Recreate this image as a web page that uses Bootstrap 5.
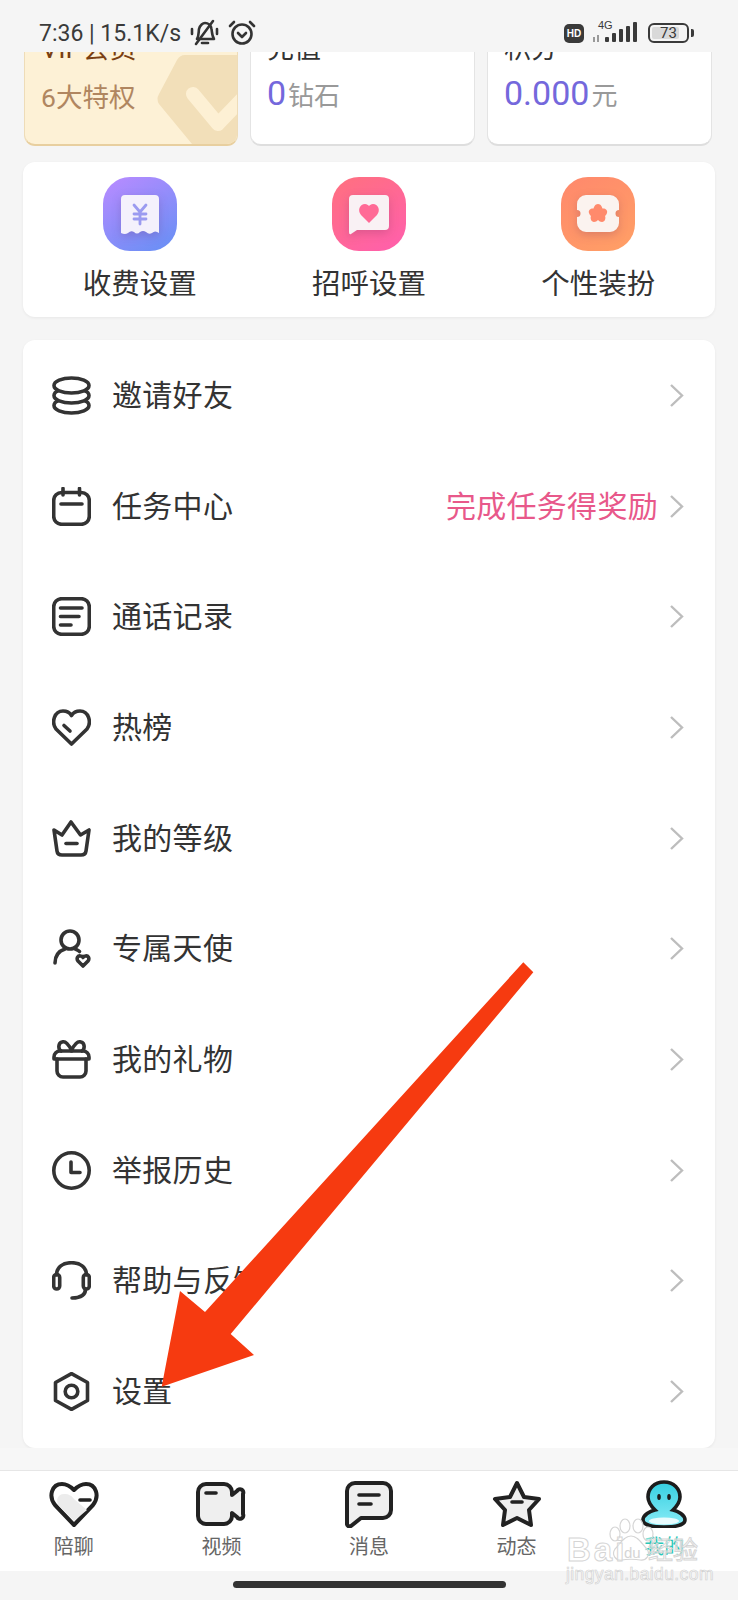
<!DOCTYPE html>
<html lang="zh-CN">
<head>
    <meta charset="UTF-8">
    <meta name="viewport" content="width=device-width, initial-scale=1.0">
    <title>我的</title>
    <link href="https://cdn.jsdelivr.net/npm/bootstrap@5.3.0/dist/css/bootstrap.min.css" rel="stylesheet">
    <style>
        body {
            background-color: #f5f5f5;
            font-family: "Roboto", "Noto Sans CJK SC", sans-serif;
            color: #333;
        }
        .phone-page {
            width: 738px;
            height: 1600px;
            overflow: hidden;
        }
        .status-bar {
            height: 52px;
            padding: 14px 44px 0 39px;
            background-color: #f5f5f5;
            font-size: 23px;
            line-height: 1;
            color: #3a3a3a;
            flex-shrink: 0;
        }
        .status-time { white-space: nowrap; }
        .hd-tag {
            width: 20px;
            height: 19px;
            border-radius: 5px;
            background-color: #3a3a3a;
            color: #fff;
            font: bold 10px/19px "Liberation Sans", sans-serif;
            text-align: center;
        }
        .net-box { width: 46px; height: 22px; margin-left: 8px; }
        .net-label {
            top: -2px;
            left: 6px;
            font: 11px/1 "Liberation Sans", sans-serif;
        }
        .batt-box {
            width: 41px;
            height: 20px;
            margin-left: 10px;
            border: 2px solid #3a3a3a;
            border-radius: 6px;
            font: 15px/16px "Roboto", sans-serif;
            text-align: center;
        }
        .batt-fill {
            top: 2px; bottom: 2px; left: 2px;
            background-color: #d9d9d9;
            border-radius: 2px;
        }
        .batt-text { z-index: 1; }
        .batt-nub {
            width: 3px;
            height: 8px;
            margin-left: 2px;
            background-color: #3a3a3a;
            border-radius: 0 2px 2px 0;
        }
        .scroll-area { height: 1396px; overflow: hidden; flex-shrink: 0; }
        .wallet-row {
            margin: -28px 0 0 24px;
            gap: 12px;
        }
        .wallet-box {
            width: 225px;
            height: 122px;
            background-color: #fff;
            border: 1px solid #e4e4e4;
            border-bottom: 2px solid #dedede;
            border-radius: 11px;
            padding: 6px 0 0 16px;
        }
        .wallet-vip {
            width: 214px;
            background-color: #fdf1d6;
            border-color: #eedcb8;
            border-bottom-color: #e8cf9f;
            overflow: hidden;
        }
        .vip-deco { right: 0; bottom: 0; }
        .wallet-title { font-size: 27px; line-height: 36px; }
        .wallet-vip .wallet-title { color: #7a3f12; }
        .wallet-value { margin-top: 3px; line-height: 46px; white-space: nowrap; }
        .wallet-vip .wallet-value { margin-top: 8px; font-size: 26.5px; color: #b08660; }
        .num-big { font-size: 34px; color: #7468dc; }
        .num-unit { font-size: 26px; color: #999; margin-left: 2px; }
        .white-panel {
            margin: 0 23px;
            background-color: #fff;
            border-radius: 12px;
            box-shadow: 0 1px 3px rgba(0, 0, 0, .06);
        }
        .tools-panel { height: 155px; margin-top: 16px; padding: 15px 2px 0; }
        .tool-label { font-size: 28.5px; line-height: 40px; margin-top: 14px; color: #333; }
        .tool-art { display: block; margin: 0 auto; }
        .soft-shadow { filter: drop-shadow(0 3px 5px rgba(90, 30, 90, .22)); }
        .menu-panel { height: 1108px; margin-top: 23px; }
        .menu-row {
            height: 110.7px;
            padding: 0 31px 0 29px;
            font-size: 30px;
            letter-spacing: .3px;
            color: #333;
        }
        .menu-row:first-child { margin-top: 2.5px; }
        .menu-icon { width: 39px; height: 39px; margin-right: 21px; flex-shrink: 0; }
        .line-art { fill: none; stroke: #333; stroke-width: 3.6; stroke-linecap: round; stroke-linejoin: round; }
        .thin-art { stroke-width: 2.6; }
        .menu-hint { color: #e8588a; margin-right: 11px; }
        .nav-gap { height: 22px; background-color: #f7f7f7; flex-shrink: 0; }
        .bottom-nav {
            height: 101px;
            padding-top: 9px;
            background-color: #fff;
            border-top: 1px solid #e6e6e6;
            flex-shrink: 0;
        }
        .nav-cell { width: 147.6px; text-align: center; font-size: 20px; line-height: 28px; color: #666; }
        .nav-art { display: block; height: 48px; margin: 0 auto 5px; }
        .nav-on { color: #2bc7b8; }
        .nav-line { fill: #efefef; stroke: #222; stroke-width: 4; stroke-linejoin: round; }
        .nav-dash { fill: none; stroke: #222; stroke-width: 3.6; stroke-linecap: round; }
        .home-area { flex: 1; }
        .home-pill { width: 273px; height: 7px; margin-top: 10px; background-color: #333; border-radius: 4px; }
        .arrow-layer { top: 0; left: 0; pointer-events: none; }
        .mark-box { left: 566px; top: 1518px; width: 135px; height: 70px; }
        .mark-bai {
            left: 1px; top: 15px;
            font: bold 33px/1 "Liberation Sans", sans-serif;
            letter-spacing: 3px;
            color: rgba(255, 255, 255, .4);
            -webkit-text-stroke: 1px #d5d5d5;
        }
        .mark-du {
            left: 58px; top: 27px;
            font: 15px/1 "Liberation Sans", sans-serif;
            color: #d5d5d5;
        }
        .mark-jing {
            left: 82px; top: 20px;
            font-size: 25px; line-height: 1;
            color: rgba(255, 255, 255, .4);
            -webkit-text-stroke: 1px #d5d5d5;
        }
        .mark-url {
            left: 0; top: 48px;
            font: 17.5px/1 "Liberation Sans", sans-serif;
            letter-spacing: .4px;
            color: rgba(255, 255, 255, .5);
            -webkit-text-stroke: .6px #cfcfcf;
            white-space: nowrap;
        }
    </style>
</head>
<body>
<div class="phone-page position-relative d-flex flex-column">

    <!-- barre de statut -->
    <div class="status-bar d-flex align-items-center position-relative">
        <span class="status-time">7:36 | 15.1K/s</span>
        <svg class="ms-2" width="31" height="28" viewBox="0 0 31 28">
            <g class="line-art thin-art">
                <path d="M8 20 C10 17 9.500 13 10 10 C11 6 14 4 16 4 C19 4 22 6 22.500 10 C23 13 23 17 25 20 Z"/>
                <path d="M13 24 H19"/>
                <path d="M7 25 L24 2"/>
                <path d="M3 10 V15 M28 10 V15"/>
            </g>
        </svg>
        <svg class="ms-2" width="28" height="28" viewBox="0 0 28 28">
            <g class="line-art thin-art">
                <circle cx="14" cy="15" r="9.500"/>
                <path d="M10 14 L14 18 L18 14"/>
                <path d="M2 7 L6 3 M26 7 L22 3"/>
            </g>
        </svg>
        <div class="ms-auto d-flex align-items-center">
            <span class="hd-tag">HD</span>
            <div class="net-box position-relative">
                <span class="net-label position-absolute">4G</span>
                <svg class="position-absolute bottom-0 start-0" width="46" height="22" viewBox="0 0 46 22">
                    <g fill="#3a3a3a">
                        <rect x="1" y="15" width="2" height="5" fill="#999"/>
                        <rect x="5" y="13" width="2" height="7" fill="#999"/>
                        <rect x="13" y="15" width="4" height="5" rx="1"/>
                        <rect x="20" y="11" width="4" height="9" rx="1"/>
                        <rect x="27" y="7" width="4" height="13" rx="1"/>
                        <rect x="34" y="4" width="4" height="16" rx="1"/>
                        <rect x="41" y="0" width="4" height="20" rx="1"/>
                    </g>
                </svg>
            </div>
            <div class="batt-box position-relative">
                <div class="batt-fill position-absolute" style="width: 73%"></div>
                <span class="batt-text position-relative">73</span>
            </div>
            <span class="batt-nub"></span>
        </div>
    </div>

    <div class="scroll-area">
        <!-- cartes du haut -->
        <div class="wallet-row d-flex">
            <div class="wallet-box wallet-vip position-relative">
                <svg class="vip-deco position-absolute" width="80" height="90" viewBox="0 0 80 90">
                    <path d="M28 1 H80 V90 H35 L2 50 Q-1 45 2 40 L20 6 Q23 1 28 1 Z" fill="#f2dfb9"/>
                    <path d="M36 40 L61 70 L86 44" fill="none" stroke="#fdf0d4" stroke-width="14" stroke-linecap="round" stroke-linejoin="round"/>
                </svg>
                <div class="wallet-title position-relative">VIP会员</div>
                <div class="wallet-value position-relative">6大特权</div>
            </div>
            <div class="wallet-box">
                <div class="wallet-title">充值</div>
                <div class="wallet-value"><span class="num-big">0</span><span class="num-unit">钻石</span></div>
            </div>
            <div class="wallet-box">
                <div class="wallet-title">积分</div>
                <div class="wallet-value"><span class="num-big">0.000</span><span class="num-unit">元</span></div>
            </div>
        </div>

        <!-- trois raccourcis -->
        <div class="white-panel tools-panel row g-0 text-center">
            <div class="col-4">
                <svg class="tool-art" width="74" height="74" viewBox="0 0 74 74">
                    <defs><linearGradient id="g1" x1="0.2" y1="0" x2="0.8" y2="1"><stop offset="0" stop-color="#b48bff"/><stop offset="1" stop-color="#6b8ff5"/></linearGradient></defs>
                    <rect width="74" height="74" rx="27" fill="url(#g1)"/>
                    <path class="soft-shadow" d="M22 18 H52 a4 4 0 0 1 4 4 V56 Q52 53 49 56 Q46 58 43 55 Q40 53 37 55 Q34 58 31 55 Q28 53 25 56 Q22 58 18 56 V22 a4 4 0 0 1 4 -4 Z" fill="#f4f1fc"/>
                    <path d="M31 28 L37 35 L43 28 M31 37 H43 M31 42 H43 M37 35 V47" fill="none" stroke="#9b9bf0" stroke-width="2.800" stroke-linecap="round"/>
                </svg>
                <div class="tool-label">收费设置</div>
            </div>
            <div class="col-4">
                <svg class="tool-art" width="74" height="74" viewBox="0 0 74 74">
                    <defs><linearGradient id="g2" x1="0.2" y1="0" x2="0.8" y2="1"><stop offset="0" stop-color="#ff6f82"/><stop offset="1" stop-color="#ff60aa"/></linearGradient></defs>
                    <rect width="74" height="74" rx="27" fill="url(#g2)"/>
                    <path class="soft-shadow" d="M21 18 H53 a4 4 0 0 1 4 4 V49 a4 4 0 0 1 -4 4 H25 L19 57 Q17 58 17 55 V22 a4 4 0 0 1 4 -4 Z" fill="#f9f1f4"/>
                    <path d="M37 46 L29 38 C25 33 28 27 33 27 C35 27 36 28 37 29 C38 28 39 27 41 27 C46 27 49 33 45 38 Z" fill="#ff6a96"/>
                </svg>
                <div class="tool-label">招呼设置</div>
            </div>
            <div class="col-4">
                <svg class="tool-art" width="74" height="74" viewBox="0 0 74 74">
                    <defs><linearGradient id="g3" x1="0.2" y1="0" x2="0.8" y2="1"><stop offset="0" stop-color="#ff8a6c"/><stop offset="1" stop-color="#ff9e66"/></linearGradient></defs>
                    <rect width="74" height="74" rx="27" fill="url(#g3)"/>
                    <path class="soft-shadow" d="M25 18 H49 a9 9 0 0 1 9 9 V33 a3.500 3.500 0 0 0 0 7 V46 a9 9 0 0 1 -9 9 H25 a9 9 0 0 1 -9 -9 V40 a3.500 3.500 0 0 0 0 -7 V27 a9 9 0 0 1 9 -9 Z" fill="#fbf3ef"/>
                    <path d="M37 27 C40 27 41 30 41.500 31.500 C44 31 47 33 46 36 C45.500 38 44 39 44 39 C45 41 44 45 41 45 C39.500 45 38 44 37 43 C36 44 34.500 45 33 45 C30 45 29 41 30 39 C30 39 28.500 38 28 36 C27 33 30 31 32.500 31.500 C33 30 34 27 37 27 Z" fill="#ff8a6c"/>
                </svg>
                <div class="tool-label">个性装扮</div>
            </div>
        </div>

        <!-- liste -->
        <div class="white-panel menu-panel">
            <div class="menu-row d-flex align-items-center">
                <svg class="menu-icon" viewBox="0 0 39 39"><g class="line-art">
                    <ellipse cx="19.500" cy="29.500" rx="17.500" ry="7.500" fill="#fff"/>
                    <ellipse cx="19.500" cy="19.500" rx="17.500" ry="7.500" fill="#fff"/>
                    <ellipse cx="19.500" cy="9.500" rx="17.500" ry="7.500" fill="#fff"/>
                </g></svg>
                <span>邀请好友</span>
                <svg class="ms-auto" width="15" height="25" viewBox="0 0 15 25"><path d="M2 2 L13 12.500 L2 23" fill="none" stroke="#bdbdbd" stroke-width="2.400"/></svg>
            </div>
            <div class="menu-row d-flex align-items-center">
                <svg class="menu-icon" viewBox="0 0 39 39"><g class="line-art">
                    <rect x="1.700" y="5.500" width="35.600" height="31.800" rx="8"/>
                    <path d="M11 1.500 V8 M27.500 1.500 V8 M9 17 H30"/>
                </g></svg>
                <span>任务中心</span>
                <span class="menu-hint ms-auto">完成任务得奖励</span>
                <svg width="15" height="25" viewBox="0 0 15 25"><path d="M2 2 L13 12.500 L2 23" fill="none" stroke="#bdbdbd" stroke-width="2.400"/></svg>
            </div>
            <div class="menu-row d-flex align-items-center">
                <svg class="menu-icon" viewBox="0 0 39 39"><g class="line-art">
                    <rect x="1.700" y="1.700" width="35.600" height="35.600" rx="8"/>
                    <path d="M8.500 11 H30 M8.500 19.500 H27 M8.500 28 H19"/>
                </g></svg>
                <span>通话记录</span>
                <svg class="ms-auto" width="15" height="25" viewBox="0 0 15 25"><path d="M2 2 L13 12.500 L2 23" fill="none" stroke="#bdbdbd" stroke-width="2.400"/></svg>
            </div>
            <div class="menu-row d-flex align-items-center">
                <svg class="menu-icon" viewBox="0 0 39 39"><g class="line-art">
                    <path d="M19.500 36 L4 21 C-1 14 2.500 3 11 3 C15 3 18 5 19.500 7.500 C21 5 24 3 28 3 C36.500 3 40 14 35 21 Z"/>
                    <path d="M12 17.500 L18 23"/>
                </g></svg>
                <span>热榜</span>
                <svg class="ms-auto" width="15" height="25" viewBox="0 0 15 25"><path d="M2 2 L13 12.500 L2 23" fill="none" stroke="#bdbdbd" stroke-width="2.400"/></svg>
            </div>
            <div class="menu-row d-flex align-items-center">
                <svg class="menu-icon" viewBox="0 0 39 39"><g class="line-art">
                    <path d="M2 11 L10 16 L19 3 L28.500 16 L37 11 L34 32 Q33.500 36 29 36 H10 Q5.500 36 5 32 Z"/>
                    <path d="M14 24.500 H25"/>
                </g></svg>
                <span>我的等级</span>
                <svg class="ms-auto" width="15" height="25" viewBox="0 0 15 25"><path d="M2 2 L13 12.500 L2 23" fill="none" stroke="#bdbdbd" stroke-width="2.400"/></svg>
            </div>
            <div class="menu-row d-flex align-items-center">
                <svg class="menu-icon" viewBox="0 0 39 39"><g class="line-art">
                    <circle cx="18" cy="11" r="9"/>
                    <path d="M3 34 C3 27 7 22 13 20 M23 20 C25 21 26.500 21.500 27.500 22.500"/>
                    <path d="M31 37 L26 32 C24 29 26 26.500 28.500 27 C29.500 27 30.500 27.500 31 28.500 C31.500 27.500 32.500 27 33.500 27 C36 26.500 38 29 36 32 Z"/>
                </g></svg>
                <span>专属天使</span>
                <svg class="ms-auto" width="15" height="25" viewBox="0 0 15 25"><path d="M2 2 L13 12.500 L2 23" fill="none" stroke="#bdbdbd" stroke-width="2.400"/></svg>
            </div>
            <div class="menu-row d-flex align-items-center">
                <svg class="menu-icon" viewBox="0 0 39 39"><g class="line-art">
                    <path d="M5 19 V31 a6 6 0 0 0 6 6 H28 a6 6 0 0 0 6 -6 V19"/>
                    <path d="M2 19 V17 a6 6 0 0 1 6 -6 H31 a6 6 0 0 1 6 6 V19 Z"/>
                    <path d="M19.500 11 C17 4 13 1 10 2 C6 3 6 9 9 11 M19.500 11 C22 4 26 1 29 2 C33 3 33 9 30 11"/>
                </g></svg>
                <span>我的礼物</span>
                <svg class="ms-auto" width="15" height="25" viewBox="0 0 15 25"><path d="M2 2 L13 12.500 L2 23" fill="none" stroke="#bdbdbd" stroke-width="2.400"/></svg>
            </div>
            <div class="menu-row d-flex align-items-center">
                <svg class="menu-icon" viewBox="0 0 39 39"><g class="line-art">
                    <circle cx="19.500" cy="19.500" r="17.700"/>
                    <path d="M19 11 V21.500 H28"/>
                </g></svg>
                <span>举报历史</span>
                <svg class="ms-auto" width="15" height="25" viewBox="0 0 15 25"><path d="M2 2 L13 12.500 L2 23" fill="none" stroke="#bdbdbd" stroke-width="2.400"/></svg>
            </div>
            <div class="menu-row d-flex align-items-center">
                <svg class="menu-icon" viewBox="0 0 39 39"><g class="line-art">
                    <path d="M4.500 14 C4.500 6 11 1.700 19.500 1.700 C28 1.700 34.500 6 34.500 14"/>
                    <rect x="1.700" y="13.500" width="6" height="14.500" rx="3"/>
                    <rect x="31.300" y="13.500" width="6" height="14.500" rx="3"/>
                    <path d="M33.500 28 C33.500 33.500 29 37 20 37"/>
                </g></svg>
                <span>帮助与反馈</span>
                <svg class="ms-auto" width="15" height="25" viewBox="0 0 15 25"><path d="M2 2 L13 12.500 L2 23" fill="none" stroke="#bdbdbd" stroke-width="2.400"/></svg>
            </div>
            <div class="menu-row d-flex align-items-center">
                <svg class="menu-icon" viewBox="0 0 39 39"><g class="line-art">
                    <path d="M19.500 1.700 L35.500 10.500 V28.500 L19.500 37.300 L3.500 28.500 V10.500 Z"/>
                    <circle cx="19.500" cy="19.500" r="6.300"/>
                </g></svg>
                <span>设置</span>
                <svg class="ms-auto" width="15" height="25" viewBox="0 0 15 25"><path d="M2 2 L13 12.500 L2 23" fill="none" stroke="#bdbdbd" stroke-width="2.400"/></svg>
            </div>
        </div>
    </div>

    <div class="nav-gap"></div>

    <!-- navigation du bas -->
    <div class="bottom-nav d-flex">
        <div class="nav-cell">
            <svg class="nav-art" width="50" height="48" viewBox="0 0 50 48">
                <path d="M25 45 L6 25 C-1 16 3 4 13 4 C18 4 22 7 25 10 C28 7 32 4 37 4 C47 4 51 16 44 25 Z" fill="#fff" stroke="#222" stroke-width="4" stroke-linejoin="round"/>
                <path d="M25 41 L10 26 C6 20 9 14 15 14 C20 14 23 16 25 19 L38 30 Z" fill="#ececec"/>
                <path class="nav-dash" d="M31 20 H41"/>
            </svg>
            <div>陪聊</div>
        </div>
        <div class="nav-cell">
            <svg class="nav-art" width="50" height="48" viewBox="0 0 50 48">
                <path class="nav-line" d="M10 4 H28 a8 8 0 0 1 8 8 V15 L41 11 a3 3 0 0 1 6 3 V34 a3 3 0 0 1 -6 3 L36 33 V36 a8 8 0 0 1 -8 8 H10 a8 8 0 0 1 -8 -8 V12 a8 8 0 0 1 8 -8 Z"/>
                <path class="nav-dash" d="M10 13 H20"/>
            </svg>
            <div>视频</div>
        </div>
        <div class="nav-cell">
            <svg class="nav-art" width="48" height="48" viewBox="0 0 48 48">
                <path class="nav-line" d="M10 3 H38 a8 8 0 0 1 8 8 V30 a8 8 0 0 1 -8 8 H16 L6 46 Q2 47 2 44 V11 a8 8 0 0 1 8 -8 Z"/>
                <path class="nav-dash" d="M14 15 H34 M14 24 H26"/>
            </svg>
            <div>消息</div>
        </div>
        <div class="nav-cell">
            <svg class="nav-art" width="50" height="48" viewBox="0 0 50 48">
                <path class="nav-line" d="M25 3 L32 17 L47 19 L37 30 L39 45 L25 38 L11 45 L13 30 L3 19 L18 17 Z"/>
                <path class="nav-dash" d="M20 22 H30"/>
            </svg>
            <div>动态</div>
        </div>
        <div class="nav-cell nav-on">
            <svg class="nav-art" width="46" height="48" viewBox="0 0 46 48">
                <defs><linearGradient id="g4" x1="0" y1="0" x2="0" y2="1"><stop offset="0" stop-color="#35cfe0"/><stop offset="1" stop-color="#8aecf7"/></linearGradient></defs>
                <path d="M23 2 C33 2 39 9 39 17 C39 23 35 27 32 30 C37 31 44 35 44 40 C44 45 34 47 23 47 C12 47 2 45 2 40 C2 35 9 31 14 30 C11 27 7 23 7 17 C7 9 13 2 23 2 Z" fill="url(#g4)" stroke="#1c1c1c" stroke-width="3.600"/>
                <ellipse cx="23" cy="41" rx="15" ry="3.500" fill="#e8fbfd"/>
                <ellipse cx="18" cy="17" rx="1.800" ry="3" fill="#1c1c1c"/>
                <ellipse cx="28" cy="17" rx="1.800" ry="3" fill="#1c1c1c"/>
            </svg>
            <div>我的</div>
        </div>
    </div>

    <div class="home-area d-flex justify-content-center">
        <div class="home-pill"></div>
    </div>

    <!-- flèche rouge -->
    <svg class="arrow-layer position-absolute" width="738" height="1600" viewBox="0 0 738 1600">
        <polygon points="523.3,962.3 533.3,972.3 230.7,1334 254,1355 161.7,1386.7 180,1291 205,1312" fill="#f63a10"/>
    </svg>

    <!-- filigrane -->
    <div class="mark-box position-absolute">
        <svg class="position-absolute top-0 start-0" width="135" height="50" viewBox="0 0 135 50">
            <g fill="rgba(255,255,255,.4)" stroke="#d5d5d5" stroke-width="1.200">
                <ellipse cx="49" cy="16" rx="5" ry="7"/>
                <ellipse cx="59" cy="8" rx="5" ry="7"/>
                <ellipse cx="72" cy="8" rx="5" ry="7"/>
                <ellipse cx="82" cy="16" rx="5" ry="7"/>
                <path d="M65 18 C72 18 76 26 81 31 C85 37 80 43 74 42 C70 41 60 41 56 42 C50 43 45 37 49 31 C54 26 58 18 65 18 Z"/>
            </g>
        </svg>
        <span class="mark-bai position-absolute">Bai</span>
        <span class="mark-du position-absolute">du</span>
        <span class="mark-jing position-absolute">经验</span>
        <span class="mark-url position-absolute">jingyan.baidu.com</span>
    </div>
</div>
<script src="https://cdn.jsdelivr.net/npm/bootstrap@5.3.0/dist/js/bootstrap.bundle.min.js"></script>
</body>
</html>
